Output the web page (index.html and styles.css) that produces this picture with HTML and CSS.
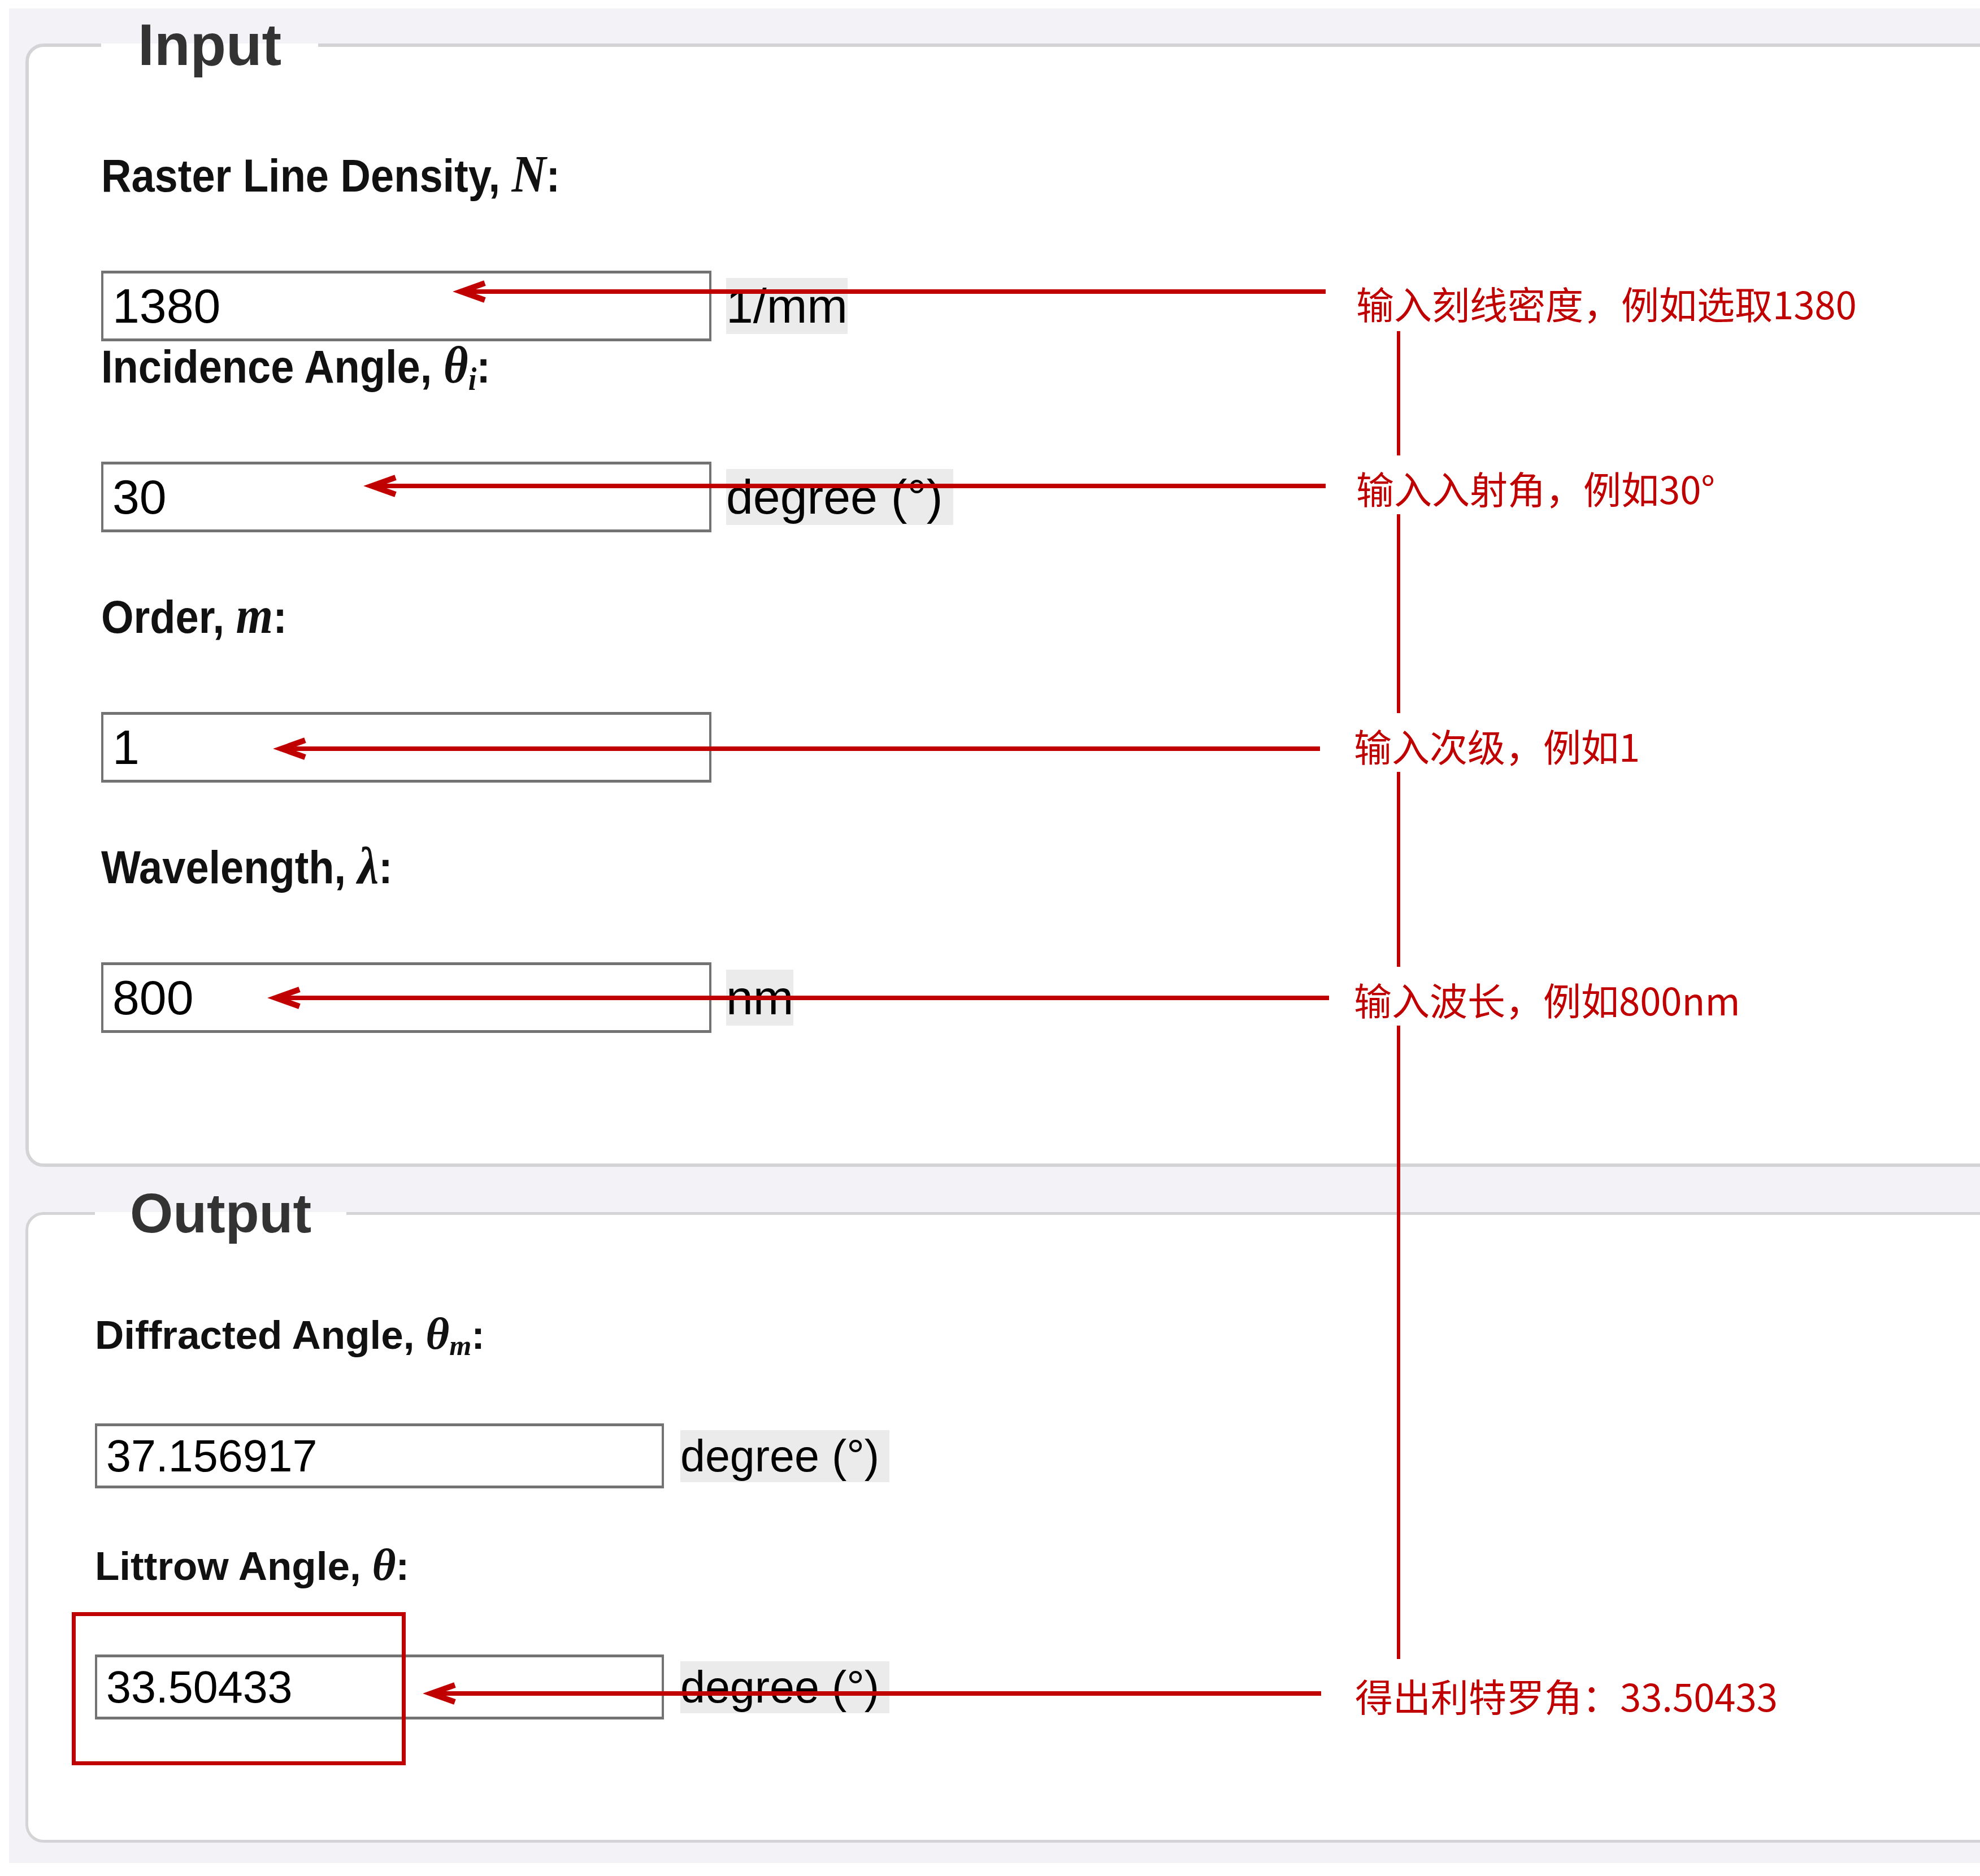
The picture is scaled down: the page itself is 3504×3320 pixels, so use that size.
FILE: index.html
```html
<!DOCTYPE html>
<html lang="en">
<head>
<meta charset="utf-8">
<title>Littrow Angle Calculator</title>
<link rel="stylesheet" href="styles.css">
</head>
<body>
<div class="page">
  <fieldset class="fs fs-in">
    <legend>Input</legend>
    <div class="group">
      <div class="label">Raster Line Density, <i class="m">N</i>:</div>
      <div class="row"><input class="val" type="text" value="1380" readonly><span class="unit">1/mm</span></div>
    </div>
    <div class="group tight">
      <div class="label">Incidence Angle, <i class="m">θ<sub>i</sub></i>:</div>
      <div class="row"><input class="val" type="text" value="30" readonly><span class="unit deg">degree (°)</span></div>
    </div>
    <div class="group">
      <div class="label">Order, <i class="m">m</i>:</div>
      <div class="row"><input class="val" type="text" value="1" readonly></div>
    </div>
    <div class="group">
      <div class="label">Wavelength, <i class="m">λ</i>:</div>
      <div class="row"><input class="val" type="text" value="800" readonly><span class="unit">nm</span></div>
    </div>
  </fieldset>
  <fieldset class="fs fs-out">
    <legend>Output</legend>
    <div class="group">
      <div class="label">Diffracted Angle, <i class="m">θ<sub>m</sub></i>:</div>
      <div class="row"><input class="val" type="text" value="37.156917" readonly><span class="unit deg">degree (°)</span></div>
    </div>
    <div class="group">
      <div class="label">Littrow Angle, <i class="m">θ</i>:</div>
      <div class="row"><input class="val" type="text" value="33.50433" readonly><span class="unit deg">degree (°)</span></div>
    </div>
  </fieldset>
</div>

<div class="annot">
  <svg class="arrows" width="3504" height="3320" viewBox="0 0 3504 3320">
    <g stroke="#c00000" fill="none" stroke-linejoin="miter">
      <line x1="2475" y1="586" x2="2475" y2="2936" stroke-width="6"/>
      <g stroke-width="8">
        <line x1="817" y1="516" x2="2346" y2="516"/>
        <line x1="659" y1="860" x2="2346" y2="860"/>
        <line x1="499" y1="1325" x2="2336" y2="1325"/>
        <line x1="489" y1="1766" x2="2352" y2="1766"/>
        <line x1="764" y1="2997" x2="2338" y2="2997"/>
      </g>
      <g stroke-width="10" stroke-miterlimit="6">
        <polyline points="858,501 816,516 858,531"/>
        <polyline points="700,845 658,860 700,875"/>
        <polyline points="540,1310 498,1325 540,1340"/>
        <polyline points="530,1751 488,1766 530,1781"/>
        <polyline points="805,2982 763,2997 805,3012"/>
      </g>
    </g>
  </svg>
  <div class="hl-box"></div>
  <div class="note n1">输入刻线密度，例如选取1380</div>
  <div class="note n2">输入入射角，例如30°</div>
  <div class="note n3">输入次级，例如1</div>
  <div class="note n4">输入波长，例如800nm</div>
  <div class="note n5">得出利特罗角：33.50433</div>
</div>
</body>
</html>
```

FILE: styles.css
```css
* {
  box-sizing: border-box;
}

html,
body {
  margin: 0;
  padding: 0;
}

body {
  position: relative;
  width: 3504px;
  height: 3320px;
  overflow: hidden;
  background: #ffffff;
  font-family: "Liberation Sans", Arial, sans-serif;
  color: #111;
}

.page {
  margin: 15px 0 0 16px;
  width: 3600px;
  background: #f3f3f7;
  padding: 5px 0 36px 29px;
}

.fs {
  margin: 0;
  width: 3600px;
  min-width: 0;
  background: #ffffff;
  border-style: solid;
  border-color: #d4d4d6;
  border-radius: 32px;
}

.fs legend {
  margin: 0;
  font-weight: bold;
  color: #333;
  line-height: normal;
  white-space: nowrap;
}

.fs-in {
  border-width: 6px;
  padding: 130px 0 231px 128px;
}

.fs-in legend {
  font-size: 104px;
  padding: 0 65px;
}

.fs-out {
  margin-top: 26px;
  border-width: 5px;
  padding: 116px 0 213px 118px;
}

.fs-out legend {
  font-size: 98px;
  padding: 0 62px;
}

.group {
  display: flex;
  flex-direction: column;
  align-items: flex-start;
}

.fs-in .group {
  gap: 126px;
}

.fs-in .group + .group {
  margin-top: 108px;
}

.fs-in .group.tight {
  margin-top: 3px;
}

.fs-out .group {
  gap: 119px;
}

.fs-out .group + .group {
  margin-top: 95px;
}

.label {
  font-weight: bold;
  color: #111;
  white-space: nowrap;
}

.fs-in .label {
  font-size: 74px;
  line-height: 84px;
  height: 84px;
  transform: scaleY(1.1);
  transform-origin: 0 68px;
}

.fs-out .label {
  font-size: 71px;
  line-height: 80px;
  height: 80px;
}

.m {
  font-family: "Liberation Serif", "DejaVu Serif", serif;
  font-style: italic;
  font-weight: bold;
  font-size: 1.14em;
}

.m sub {
  font-size: 0.62em;
  line-height: 0;
  vertical-align: -0.22em;
}

.row {
  display: flex;
  align-items: center;
}

.val {
  margin: 0;
  font-family: "Liberation Sans", Arial, sans-serif;
  color: #000;
  background: #ffffff;
  border-style: solid;
  border-color: #737373;
  border-width: 5px 4px;
  border-radius: 0;
  padding: 0 0 0 16px;
  outline: none;
}

.fs-in .val {
  width: 1080px;
  height: 125px;
  font-size: 86px;
}

.fs-out .val {
  width: 1007px;
  height: 115px;
  font-size: 79px;
}

.unit {
  background: #ebebeb;
  color: #000;
  line-height: normal;
  white-space: nowrap;
}

.fs-in .unit {
  font-size: 86px;
  margin-left: 26px;
}

.fs-out .unit {
  font-size: 79px;
  margin-left: 29px;
}

.unit.deg {
  padding-right: 0.22em;
}

/* annotation overlay */
.annot {
  position: absolute;
  left: 0;
  top: 0;
  width: 3504px;
  height: 3320px;
  pointer-events: none;
}

.arrows {
  position: absolute;
  left: 0;
  top: 0;
}

.hl-box {
  position: absolute;
  left: 127px;
  top: 2853px;
  width: 591px;
  height: 271px;
  border: 7px solid #c00000;
}

.note {
  position: absolute;
  font-family: "Noto Sans CJK SC", "Microsoft YaHei", sans-serif;
  font-size: 67px;
  line-height: 66px;
  color: #c00000;
  background: #ffffff;
  padding: 24px 8px 14px 4px;
  white-space: nowrap;
}

.n1 {
  left: 2396px;
  top: 479px;
}

.n2 {
  left: 2396px;
  top: 806px;
}

.n3 {
  left: 2392px;
  top: 1262px;
}

.n4 {
  left: 2392px;
  top: 1711px;
}

.n5 {
  left: 2394px;
  top: 2943px;
}
```
